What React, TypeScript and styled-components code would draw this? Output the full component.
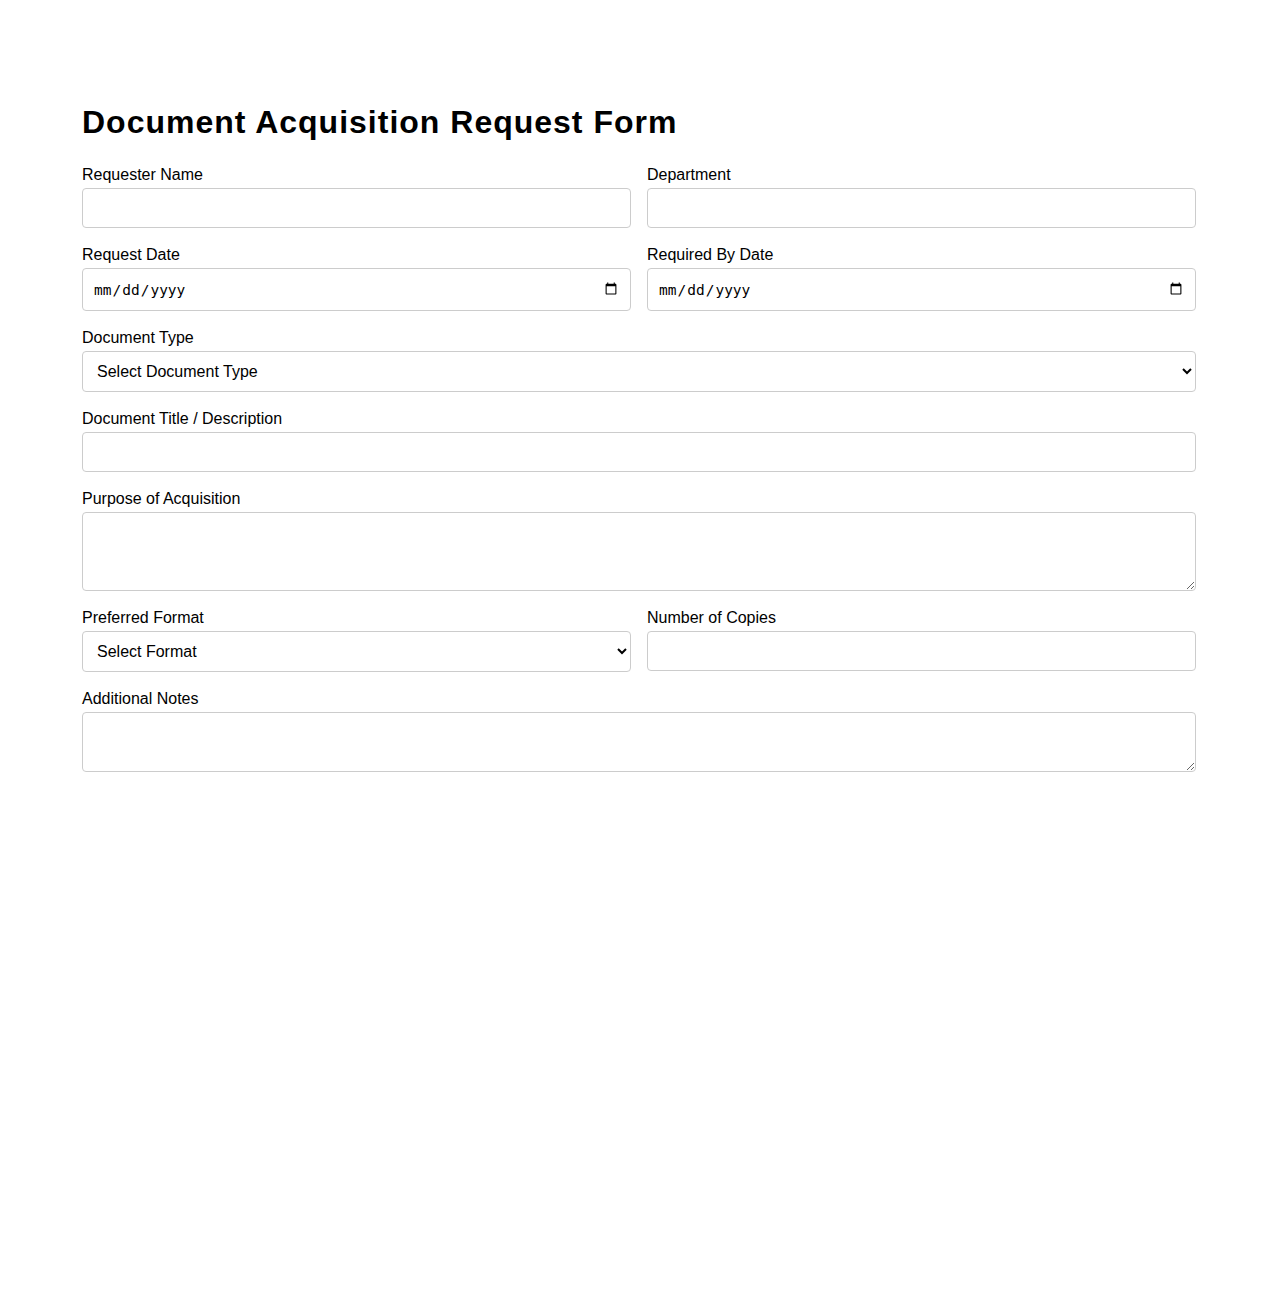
import React from "react";
import styled, { createGlobalStyle } from "styled-components";

const GlobalStyle = createGlobalStyle`
	body {
		margin: 0;
		background: #fff;
		font-family: "Liberation Sans", Arial, sans-serif;
		color: #000;
	}
`;

const Page = styled.div`
	max-width: 1114px;
	margin: 0 auto;
	padding-top: 104px;
`;

const Title = styled.h1`
	margin: 0 0 24px;
	font-size: 32px;
	font-weight: bold;
	letter-spacing: 1px;
	color: #000;
`;

const Row = styled.div`
	display: grid;
	grid-template-columns: 1fr 1fr;
	column-gap: 16px;
`;

const Group = styled.div`
	margin-bottom: 17px;
`;

const Label = styled.label`
	display: block;
	margin-bottom: 4px;
	font-size: 16px;
	line-height: 19px;
`;

const fieldCss = `
	display: block;
	width: 100%;
	box-sizing: border-box;
	padding: 10px;
	border: 1px solid #ccc;
	border-radius: 4px;
	background: #fff;
	font-size: 16px;
	color: #000;
`;

const Input = styled.input`
	${fieldCss}
	height: 40px;
	font-family: "Liberation Sans", Arial, sans-serif;
`;

const DateInput = styled.input`
	${fieldCss}
	height: 43px;
	font-family: "DejaVu Sans Mono", monospace;
	font-size: 14.5px;
`;

const Select = styled.select`
	${fieldCss}
	height: 41px;
	padding: 10px 7px 10px 10px;
	font-family: "Liberation Sans", Arial, sans-serif;
`;

const TextArea = styled.textarea<{ $height: number }>`
	${fieldCss}
	height: ${(p) => p.$height}px;
	font-family: "Liberation Sans", Arial, sans-serif;
	resize: vertical;
`;

export default function App() {
	return (
		<>
			<GlobalStyle />
			<Page>
				<Title>Document Acquisition Request Form</Title>
				<form>
					<Row>
						<Group>
							<Label htmlFor="requester">Requester Name</Label>
							<Input id="requester" type="text" />
						</Group>
						<Group>
							<Label htmlFor="department">Department</Label>
							<Input id="department" type="text" />
						</Group>
					</Row>
					<Row>
						<Group>
							<Label htmlFor="requestDate">Request Date</Label>
							<DateInput id="requestDate" type="date" />
						</Group>
						<Group>
							<Label htmlFor="requiredDate">Required By Date</Label>
							<DateInput id="requiredDate" type="date" />
						</Group>
					</Row>
					<Group>
						<Label htmlFor="docType">Document Type</Label>
						<Select id="docType" defaultValue="">
							<option value="">Select Document Type</option>
							<option value="report">Report</option>
							<option value="contract">Contract</option>
							<option value="manual">Manual</option>
							<option value="other">Other</option>
						</Select>
					</Group>
					<Group>
						<Label htmlFor="docTitle">Document Title / Description</Label>
						<Input id="docTitle" type="text" />
					</Group>
					<Group>
						<Label htmlFor="purpose">Purpose of Acquisition</Label>
						<TextArea id="purpose" $height={79} />
					</Group>
					<Row>
						<Group>
							<Label htmlFor="format">Preferred Format</Label>
							<Select id="format" defaultValue="">
								<option value="">Select Format</option>
								<option value="digital">Digital</option>
								<option value="print">Print</option>
							</Select>
						</Group>
						<Group>
							<Label htmlFor="copies">Number of Copies</Label>
							<Input id="copies" type="number" min={1} />
						</Group>
					</Row>
					<Group>
						<Label htmlFor="notes">Additional Notes</Label>
						<TextArea id="notes" $height={60} />
					</Group>
				</form>
			</Page>
		</>
	);
}
